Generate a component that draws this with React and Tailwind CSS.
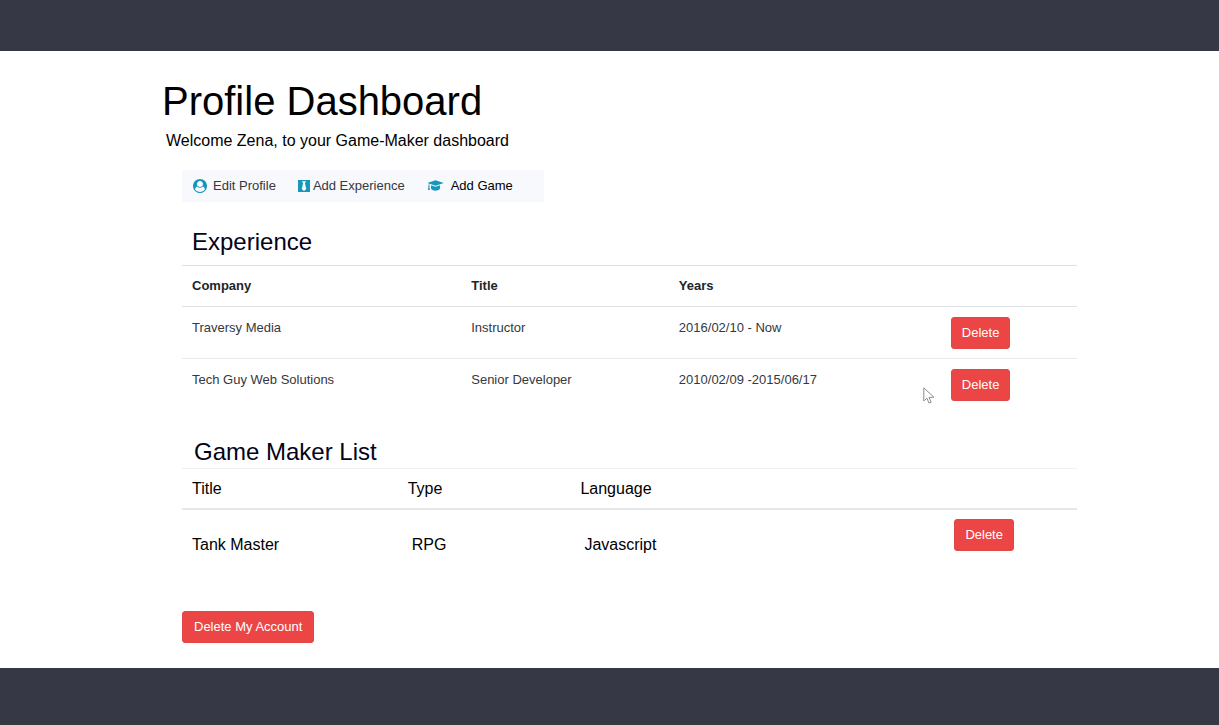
import React from "react";

const experience = [
  { company: "Traversy Media", title: "Instructor", years: "2016/02/10 - Now" },
  { company: "Tech Guy Web Solutions", title: "Senior Developer", years: "2010/02/09 -2015/06/17" },
];

const games = [{ title: "Tank Master", type: "RPG", language: "Javascript" }];

function UserIcon() {
  return (
    <svg viewBox="0 0 1792 1792" className="h-[14px] w-[14px]" fill="#1798bb" aria-hidden="true">
      <path d="M1523 1339q-22-155-87.500-257.500t-184.500-118.500q-67 74-159.500 115.500t-195.500 41.500-195.500-41.500-159.500-115.500q-119 16-184.500 118.500t-87.500 257.500q106 150 271 237.500t356 87.500 356-87.500 271-237.500zm-243-699q0-159-112.500-271.500t-271.500-112.500-271.500 112.500-112.500 271.500 112.500 271.500 271.500 112.500 271.500-112.500 112.500-271.500zM1792 896q0 182-71 347.500t-190.500 286-285.500 191.500-349 71q-182 0-348-71t-286-191-191-286-71-348 71-348 191-286 286-191 348-71 348 71 286 191 191 286 71 348z" fillRule="evenodd" />
    </svg>
  );
}

function TieIcon() {
  return (
    <svg viewBox="0 0 12 12" className="h-3 w-3" aria-hidden="true">
      <rect width="12" height="12" fill="#1798bb" />
      <path d="M4 1.300h4L6.900 3.300 8.200 9 6 11 3.800 9l1.300-5.700z" fill="#fff" />
    </svg>
  );
}

function CapIcon() {
  return (
    <svg viewBox="0 0 17 14" className="h-[14px] w-[17px]" fill="#1798bb" aria-hidden="true">
      <path d="M8.500 1.200 16.800 3.900 8.500 6.700 2.900 4.800c-.5.500-.7 1-.7 1.700.5.300.6 1 .2 1.400L2.900 11H.900l.6-3.100c-.5-.4-.4-1.100.1-1.400 0-.8.200-1.500.6-2L.200 3.900z" />
      <path d="M4.100 6.300 8.500 7.800 12.900 6.300 13.100 9.300C12.800 10.700 10.800 11.700 8.500 11.700S4.200 10.700 3.900 9.300z" />
    </svg>
  );
}

function CursorIcon() {
  return (
    <svg
      viewBox="0 0 12 18"
      className="absolute top-[18px] -left-7 h-[18px] w-3"
      aria-hidden="true"
    >
      <path
        d="M.8.900V14l3.100-2.800 2.100 4.900 2.200-.9-2.100-4.700 4.800-.4z"
        fill="#fff"
        stroke="#8c8c8c"
        strokeWidth="1"
      />
    </svg>
  );
}

function DangerButton({ children, className = "px-[10px]" }) {
  return (
    <button
      type="button"
      className={
        "block h-8 rounded-[3px] border border-[#e04848] bg-[#ec4545] text-[13px] leading-5 whitespace-nowrap text-white " +
        className
      }
    >
      {children}
    </button>
  );
}

function ActionLink({ icon, children, className }) {
  return (
    <a href="#" className={"flex items-center " + className}>
      {icon}
      {children}
    </a>
  );
}

export default function App() {
  return (
    <div className="flex min-h-screen flex-col bg-white font-['Liberation_Sans',Arial,sans-serif] text-black">
      <header className="h-[51px] bg-[#363945]" />
      <main className="flex-1 pt-[26px] pr-[142px] pb-[25px] pl-[162px]">
        <h1 className="text-[40px] leading-[48px]">Profile Dashboard</h1>
        <p className="mt-1 pl-1 text-base leading-6">
          Welcome Zena, to your Game-Maker dashboard
        </p>

        <div className="pl-5">
          <nav className="mt-[17px] flex h-8 w-[362px] items-center bg-[#f8f9fc] pl-[11px] text-[13px] leading-5 text-[#343840]">
            <ActionLink icon={<UserIcon />} className="gap-[6px]">Edit Profile</ActionLink>
            <ActionLink icon={<TieIcon />} className="ml-[22px] gap-[3px]">Add Experience</ActionLink>
            <ActionLink icon={<CapIcon />} className="ml-[22px] gap-[7px] text-black">Add Game</ActionLink>
          </nav>

          <section>
            <h2 className="mt-6 pl-[10px] text-2xl leading-8 text-[#020218]">Experience</h2>
            <table className="mt-[7px] w-full table-fixed border-separate border-spacing-0 text-left text-[13px] leading-[22px] text-[#343840]">
              <colgroup>
                <col className="w-[31.2%]" />
                <col className="w-[23.2%]" />
                <col className="w-[31.5%]" />
                <col />
              </colgroup>
              <thead className="text-[#212529]">
                <tr className="[&>*]:h-[42px] [&>*]:border-t [&>*]:border-b [&>*]:border-[#dee0e3] [&>*]:pl-[10px]">
                  <th scope="col">Company</th>
                  <th scope="col">Title</th>
                  <th scope="col">Years</th>
                  <td />
                </tr>
              </thead>
              <tbody>
                {experience.map((job, i) => (
                  <tr
                    key={job.company}
                    className="align-top [&>td]:border-[#eaebed] [&>td]:pt-[10px] [&>td]:pb-[9px] [&:not(:last-child)>td]:border-b"
                  >
                    <td className="pl-[10px]">{job.company}</td>
                    <td className="pl-[10px]">{job.title}</td>
                    <td className="pl-[10px]">{job.years}</td>
                    <td>
                      <div className="relative">
                        <DangerButton>Delete</DangerButton>
                        {i === 1 && <CursorIcon />}
                      </div>
                    </td>
                  </tr>
                ))}
              </tbody>
            </table>
          </section>

          <section>
            <h2 className="mt-[26px] pl-3 text-2xl leading-8 text-[#020218]">Game Maker List</h2>
            <table className="w-full table-fixed border-separate border-spacing-0 text-left text-base leading-6">
              <colgroup>
                <col className="w-[24.1%]" />
                <col className="w-[19.3%]" />
                <col className="w-[42.9%]" />
                <col />
              </colgroup>
              <thead>
                <tr className="[&>*]:h-[42px] [&>*]:border-t [&>*]:border-b-2 [&>*]:border-t-[#eeeff1] [&>*]:border-b-[#e6e7e9] [&>*]:pl-[10px] [&>*]:font-normal">
                  <th scope="col">Title</th>
                  <th scope="col">Type</th>
                  <th scope="col">Language</th>
                  <td />
                </tr>
              </thead>
              <tbody>
                {games.map((game) => (
                  <tr key={game.title} className="align-top">
                    <td className="pt-[23px] pl-[10px]">{game.title}</td>
                    <td className="pt-[23px] pl-[14px]">{game.type}</td>
                    <td className="pt-[23px] pl-[14px]">{game.language}</td>
                    <td className="pt-[9px]">
                      <DangerButton>Delete</DangerButton>
                    </td>
                  </tr>
                ))}
              </tbody>
            </table>
          </section>

          <div className="mt-[54px]">
            <DangerButton className="px-[11px]">Delete My Account</DangerButton>
          </div>
        </div>
      </main>
      <footer className="h-[57px] bg-[#363945]" />
    </div>
  );
}
